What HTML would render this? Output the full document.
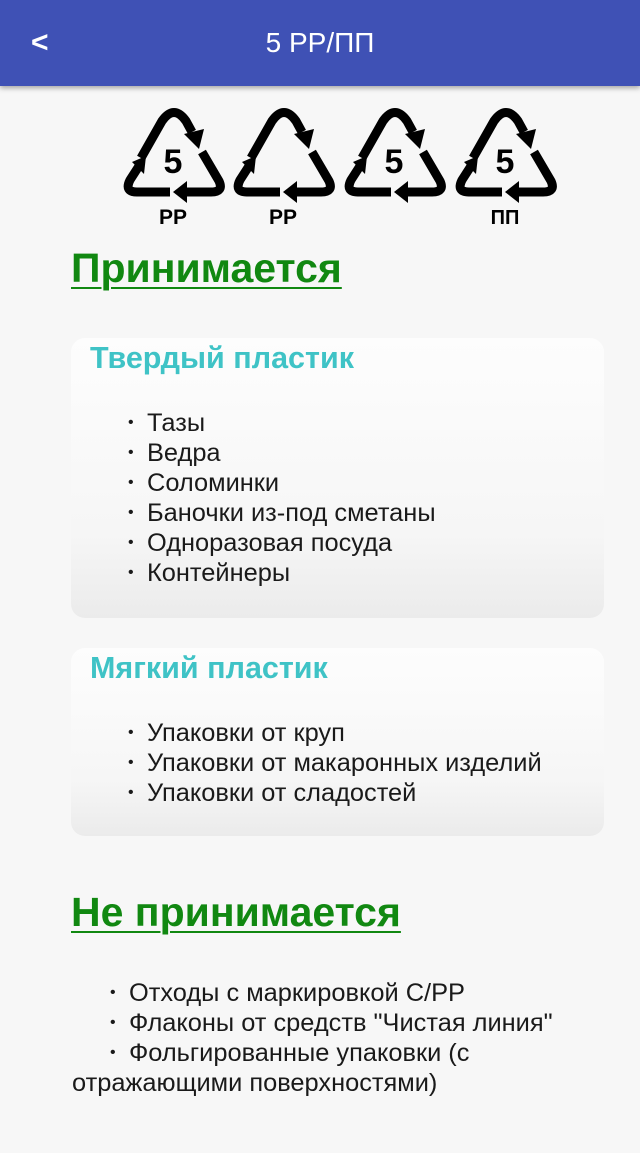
<!DOCTYPE html>
<html><head><meta charset="utf-8"><style>
body{margin:0;width:640px;height:1153px;background:#f7f7f7;font-family:"Liberation Sans",Arial,sans-serif;position:relative;overflow:hidden}
.hdr{position:absolute;left:0;top:0;width:640px;height:86px;background:#3f51b5;box-shadow:0 2px 5px rgba(0,0,0,.35)}
.hdr .t{position:absolute;left:0;width:640px;top:27px;text-align:center;color:#fff;font-size:28px}
.hdr .b{position:absolute;left:31px;top:26px;color:#fff;font-size:30px;font-weight:bold}
.h{position:absolute;left:71px;color:#118811;font-weight:bold;font-size:41px;text-decoration:underline;text-decoration-thickness:2px;text-underline-offset:5px}
.card{position:absolute;left:71px;width:533px;border-radius:14px;background:linear-gradient(#fdfdfd,#f6f6f6 70%,#ebebeb)}
.ct{position:absolute;left:19px;top:3px;color:#3fc3c6;font-weight:bold;font-size:30.5px}
.li{position:absolute;font-size:25.4px;color:#1a1a1a;white-space:nowrap}
.li:before{content:"•";position:absolute;left:-19px;font-size:16px;top:5px}
.li.n:before{content:none}
.sym text{font-family:"Liberation Sans",sans-serif;font-weight:bold}
</style></head><body>
<div class="hdr"><div class="b">&lt;</div><div class="t">5 PP/ПП</div></div>
<svg class="sym" width="640" height="240" style="position:absolute;left:0;top:0">
<defs><g id="r" fill="none" stroke="#000" stroke-width="9" stroke-linejoin="round">
<path d="M17 54 L38 17 Q50 0 62 17 L68 28"/><polygon points="60,30 80,25 75,45" fill="#000" stroke="none"/>
<path d="M78 48 L95 77 Q100 88 87 88 L62 88"/><polygon points="63,77 49,88 63,99" fill="#000" stroke="none"/>
<path d="M46 88 L13 88 Q0 88 6 76 L15 62"/><polygon points="8,58 22,52 20,70" fill="#000" stroke="none"/>
</g></defs>
<use href="#r" x="124" y="104"/><use href="#r" x="234" y="104"/><use href="#r" x="345" y="104"/><use href="#r" x="456" y="104"/>
<text x="173" y="173" font-size="34" text-anchor="middle">5</text>
<text x="394" y="173" font-size="34" text-anchor="middle">5</text>
<text x="505" y="173" font-size="34" text-anchor="middle">5</text>
<text x="173" y="224" font-size="21" text-anchor="middle">PP</text>
<text x="283" y="224" font-size="21" text-anchor="middle">PP</text>
<text x="505" y="224" font-size="20" text-anchor="middle" font-family="Liberation Serif">ПП</text>
</svg>
<div class="h" style="top:245px">Принимается</div>
<div class="card" style="top:338px;height:280px"><div class="ct">Твердый пластик</div>
<div class="li" style="left:76px;top:71px">Тазы</div>
<div class="li" style="left:76px;top:101px">Ведра</div>
<div class="li" style="left:76px;top:131px">Соломинки</div>
<div class="li" style="left:76px;top:161px">Баночки из-под сметаны</div>
<div class="li" style="left:76px;top:191px">Одноразовая посуда</div>
<div class="li" style="left:76px;top:221px">Контейнеры</div>
</div>
<div class="card" style="top:648px;height:188px"><div class="ct">Мягкий пластик</div>
<div class="li" style="left:76px;top:71px">Упаковки от круп</div>
<div class="li" style="left:76px;top:101px">Упаковки от макаронных изделий</div>
<div class="li" style="left:76px;top:131px">Упаковки от сладостей</div>
</div>
<div class="h" style="top:889px">Не принимается</div>
<div class="li" style="left:129px;top:979px">Отходы с маркировкой С/PP</div>
<div class="li" style="left:129px;top:1009px">Флаконы от средств "Чистая линия"</div>
<div class="li" style="left:129px;top:1039px">Фольгированные упаковки (с</div>
<div class="li n" style="left:72px;top:1069px">отражающими поверхностями)</div>
</body></html>
